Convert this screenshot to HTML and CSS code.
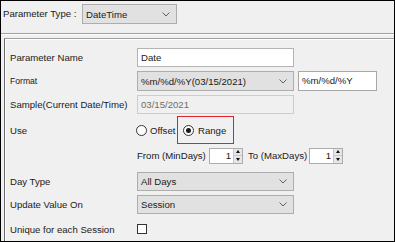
FILE: index.html
```html
<!DOCTYPE html>
<html lang="en">
<head>
  <meta charset="UTF-8" />
  <title>Parameter</title>
  <link rel="stylesheet" href="styles.css">
</head>
<body>
  <div class="window">
    <div class="topbar">
      <span class="top-label">Parameter Type :</span>
      <div class="select select-top">
        <span>DateTime</span>
        <svg class="chev" width="8" height="5" viewBox="0 0 8 5"><path d="M0.5 0.5 L4 4 L7.5 0.5" /></svg>
      </div>
    </div>

    <div class="panel">
      <!-- name -->
      <div class="row row-name">
        <span class="lbl">Parameter Name</span>
        <div class="field field-wide">Date</div>
      </div>
      <!-- format -->
      <div class="row row-format">
        <span class="lbl lbl-small">Format</span>
        <div class="select select-wide">
          <span>%m/%d/%Y(03/15/2021)</span>
          <svg class="chev" width="8" height="5" viewBox="0 0 8 5"><path d="M0.5 0.5 L4 4 L7.5 0.5" /></svg>
        </div>
        <div class="field field-format">%m/%d/%Y</div>
      </div>
      <!-- sample -->
      <div class="row row-sample">
        <span class="lbl">Sample(Current Date/Time)</span>
        <div class="field field-wide field-disabled">03/15/2021</div>
      </div>
      <!-- use -->
      <div class="row row-use">
        <span class="lbl">Use</span>
        <span class="radio"></span>
        <span class="radio-text">Offset</span>
        <div class="highlight">
          <span class="radio radio-on"></span>
          <span class="radio-text radio-text-range">Range</span>
        </div>
      </div>
      <!-- from / to -->
      <div class="row row-from">
        <span class="lbl"></span>
        <span class="from-label">From (MinDays)</span>
        <div class="spin">
          <span class="spin-val">1</span>
          <span class="spin-btns">
            <span class="spin-up"></span>
            <span class="spin-down"></span>
          </span>
        </div>
        <span class="to-label">To (MaxDays)</span>
        <div class="spin">
          <span class="spin-val">1</span>
          <span class="spin-btns">
            <span class="spin-up"></span>
            <span class="spin-down"></span>
          </span>
        </div>
      </div>
      <!-- day type -->
      <div class="row row-day">
        <span class="lbl">Day Type</span>
        <div class="select select-wide">
          <span>All Days</span>
          <svg class="chev" width="8" height="5" viewBox="0 0 8 5"><path d="M0.5 0.5 L4 4 L7.5 0.5" /></svg>
        </div>
      </div>
      <!-- update -->
      <div class="row row-update">
        <span class="lbl">Update Value On</span>
        <div class="select select-wide">
          <span>Session</span>
          <svg class="chev" width="8" height="5" viewBox="0 0 8 5"><path d="M0.5 0.5 L4 4 L7.5 0.5" /></svg>
        </div>
      </div>
      <!-- unique -->
      <div class="row row-unique">
        <span class="lbl">Unique for each Session</span>
        <span class="check"></span>
      </div>
    </div>
  </div>
</body>
</html>
```

FILE: styles.css
```css
* {
  box-sizing: border-box;
}

body {
  margin: 0;
  font-family: 'Liberation Sans', Arial, sans-serif;
  font-size: 9.6px;
  color: #1a1a1a;
  background-color: #f0f0f0;
}

.window {
  width: 395px;
  height: 242px;
  border: 1px solid #000;
  background-color: #f0f0f0;
  overflow: hidden;
}

.topbar {
  height: 33px;
  display: flex;
  align-items: flex-start;
  padding: 3px 0 0 2px;
  border-bottom: 1px solid #a0a0a0;
  box-shadow: 0 1px 0 #fff;
}

.top-label {
  width: 79px;
  line-height: 20px;
}

.select {
  display: flex;
  align-items: center;
  justify-content: space-between;
  background-color: #e1e1e1;
  border: 1px solid #adadad;
  padding: 0 6px 0 3px;
}

.select-top {
  width: 95px;
  height: 20px;
}

.select-wide {
  width: 157px;
  height: 20px;
}

.chev path {
  fill: none;
  stroke: #606060;
  stroke-width: 1;
}

.panel {
  margin: 4px 0 0 3px;
  height: 210px;
  border-top: 1px solid #a0a0a0;
  border-left: 1px solid #696969;
  box-shadow: inset 1px 1px 0 #fff;
  padding: 9px 0 0 5px;
}

.row {
  display: flex;
  align-items: center;
}

.lbl {
  width: 127px;
  flex-shrink: 0;
}

.lbl-small {
  font-size: 8.6px;
}

.field {
  height: 19px;
  background-color: #fff;
  border: 1px solid #b4b4b4;
  padding: 0 3px;
  line-height: 17px;
}

.field-wide {
  width: 157px;
}

.field-format {
  width: 79px;
  height: 20px;
  margin-left: 4px;
  border-color: #a8a8a8;
}

.field-disabled {
  background-color: #f0f0f0;
  border-color: #ccc;
  color: #6d6d6d;
}

.row-name { height: 19px; }
.row-format { height: 20px; margin-top: 4px; }
.row-sample { height: 19px; margin-top: 4px; }
.row-use { height: 28px; margin-top: 2px; }
.row-from { height: 15px; margin-top: 4px; }
.row-day { height: 19px; margin-top: 9px; }
.row-update { height: 19px; margin-top: 4px; }
.row-unique { height: 18px; margin-top: 6px; }

.row-day .select,
.row-update .select {
  height: 19px;
}

.radio {
  width: 11px;
  height: 11px;
  border: 1px solid #333;
  border-radius: 50%;
  background-color: #fff;
  margin-left: -1px;
  position: relative;
}

.radio-on::after {
  content: "";
  position: absolute;
  left: 2px;
  top: 2px;
  width: 5px;
  height: 5px;
  border-radius: 50%;
  background-color: #1a1a1a;
}

.radio-text {
  margin-left: 3px;
  width: 27px;
}

.radio-text-range {
  margin-left: 4px;
}

.highlight {
  display: flex;
  align-items: center;
  width: 57px;
  height: 28px;
  border: 1px solid #e0202a;
  padding-left: 6px;
}

.from-label {
  width: 72px;
}

.to-label {
  margin-left: 5px;
  width: 61px;
}

.spin {
  display: flex;
  width: 34px;
  height: 16px;
  background-color: #fff;
  border: 1px solid #adadad;
}

.spin-val {
  flex: 1;
  text-align: right;
  padding-right: 2px;
  line-height: 14px;
}

.spin-btns {
  width: 9px;
  display: flex;
  flex-direction: column;
  background-color: #e6e6e6;
  border-left: 1px solid #c8c8c8;
}

.spin-up,
.spin-down {
  flex: 1;
  display: flex;
  align-items: center;
  justify-content: center;
}

.spin-up {
  border-bottom: 1px solid #c8c8c8;
}

.spin-up::after {
  content: "";
  border-left: 2.5px solid transparent;
  border-right: 2.5px solid transparent;
  border-bottom: 3px solid #111;
}

.spin-down::after {
  content: "";
  border-left: 2.5px solid transparent;
  border-right: 2.5px solid transparent;
  border-top: 3px solid #111;
}

.check {
  width: 10px;
  height: 10px;
  border: 1px solid #333;
  background-color: #fff;
}
```
